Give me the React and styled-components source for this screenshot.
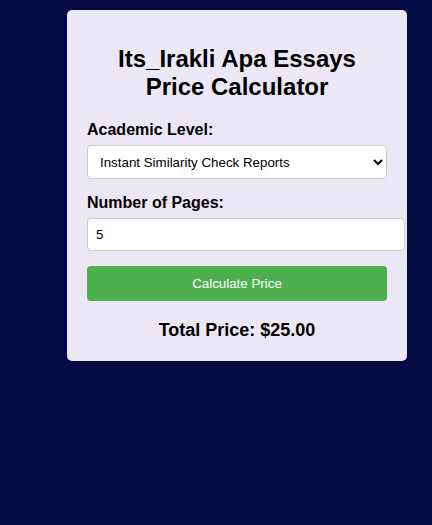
import styled, { createGlobalStyle } from "styled-components";

const GlobalStyle = createGlobalStyle`
  body {
    margin: 0;
    background: #050944;
    font-family: "Liberation Sans", Arial, sans-serif;
  }
`;

const App = () => {
  return (
    <Page>
      <GlobalStyle />
      <Card>
        <h2>
          Its_Irakli Apa Essays
          <br />
          Price Calculator
        </h2>
        <label htmlFor="level">Academic Level:</label>
        <Select id="level" defaultValue="reports">
          <option value="reports">Instant Similarity Check Reports</option>
          <option value="highschool">High School</option>
          <option value="college">College</option>
        </Select>
        <label htmlFor="pages">Number of Pages:</label>
        <PagesInput id="pages" type="number" defaultValue="5" />
        <CalcButton>Calculate Price</CalcButton>
        <Total>Total Price: $25.00</Total>
      </Card>
    </Page>
  );
};

const Page = styled.div`
  min-height: 525px;
  padding: 10px 0 0 67px;
  box-sizing: border-box;
`;

const Card = styled.div`
  width: 300px;
  padding: 20px;
  background: #ebe7f5;
  border-radius: 5px;
  h2 {
    margin: 15px 0 20px;
    font-size: 24px;
    line-height: 28px;
    text-align: center;
    color: #000;
  }
  label {
    display: block;
    margin-bottom: 6px;
    font-weight: bold;
    font-size: 16px;
    color: #000;
  }
`;

const Select = styled.select`
  display: block;
  width: 100%;
  height: 34px;
  padding: 0 8px;
  margin-bottom: 15px;
  border: 1px solid #ccc;
  border-radius: 4px;
  background: #fff;
  font-family: "Liberation Sans", Arial, sans-serif;
  font-size: 13.33px;
  color: #000;
`;

const PagesInput = styled.input`
  display: block;
  width: 100%;
  padding: 8px;
  margin-bottom: 15px;
  border: 1px solid #ccc;
  border-radius: 4px;
  background: #fff;
  font-family: "Liberation Sans", Arial, sans-serif;
  font-size: 13.33px;
  color: #000;
`;

const CalcButton = styled.button`
  display: block;
  width: 100%;
  padding: 10px;
  border: none;
  border-radius: 4px;
  background: #4caf50;
  color: #fff;
  font-family: "Liberation Sans", Arial, sans-serif;
  font-size: 13.33px;
  cursor: pointer;
`;

const Total = styled.div`
  margin-top: 18px;
  font-size: 18px;
  line-height: 22px;
  font-weight: bold;
  text-align: center;
  color: #000;
`;

export default App;
